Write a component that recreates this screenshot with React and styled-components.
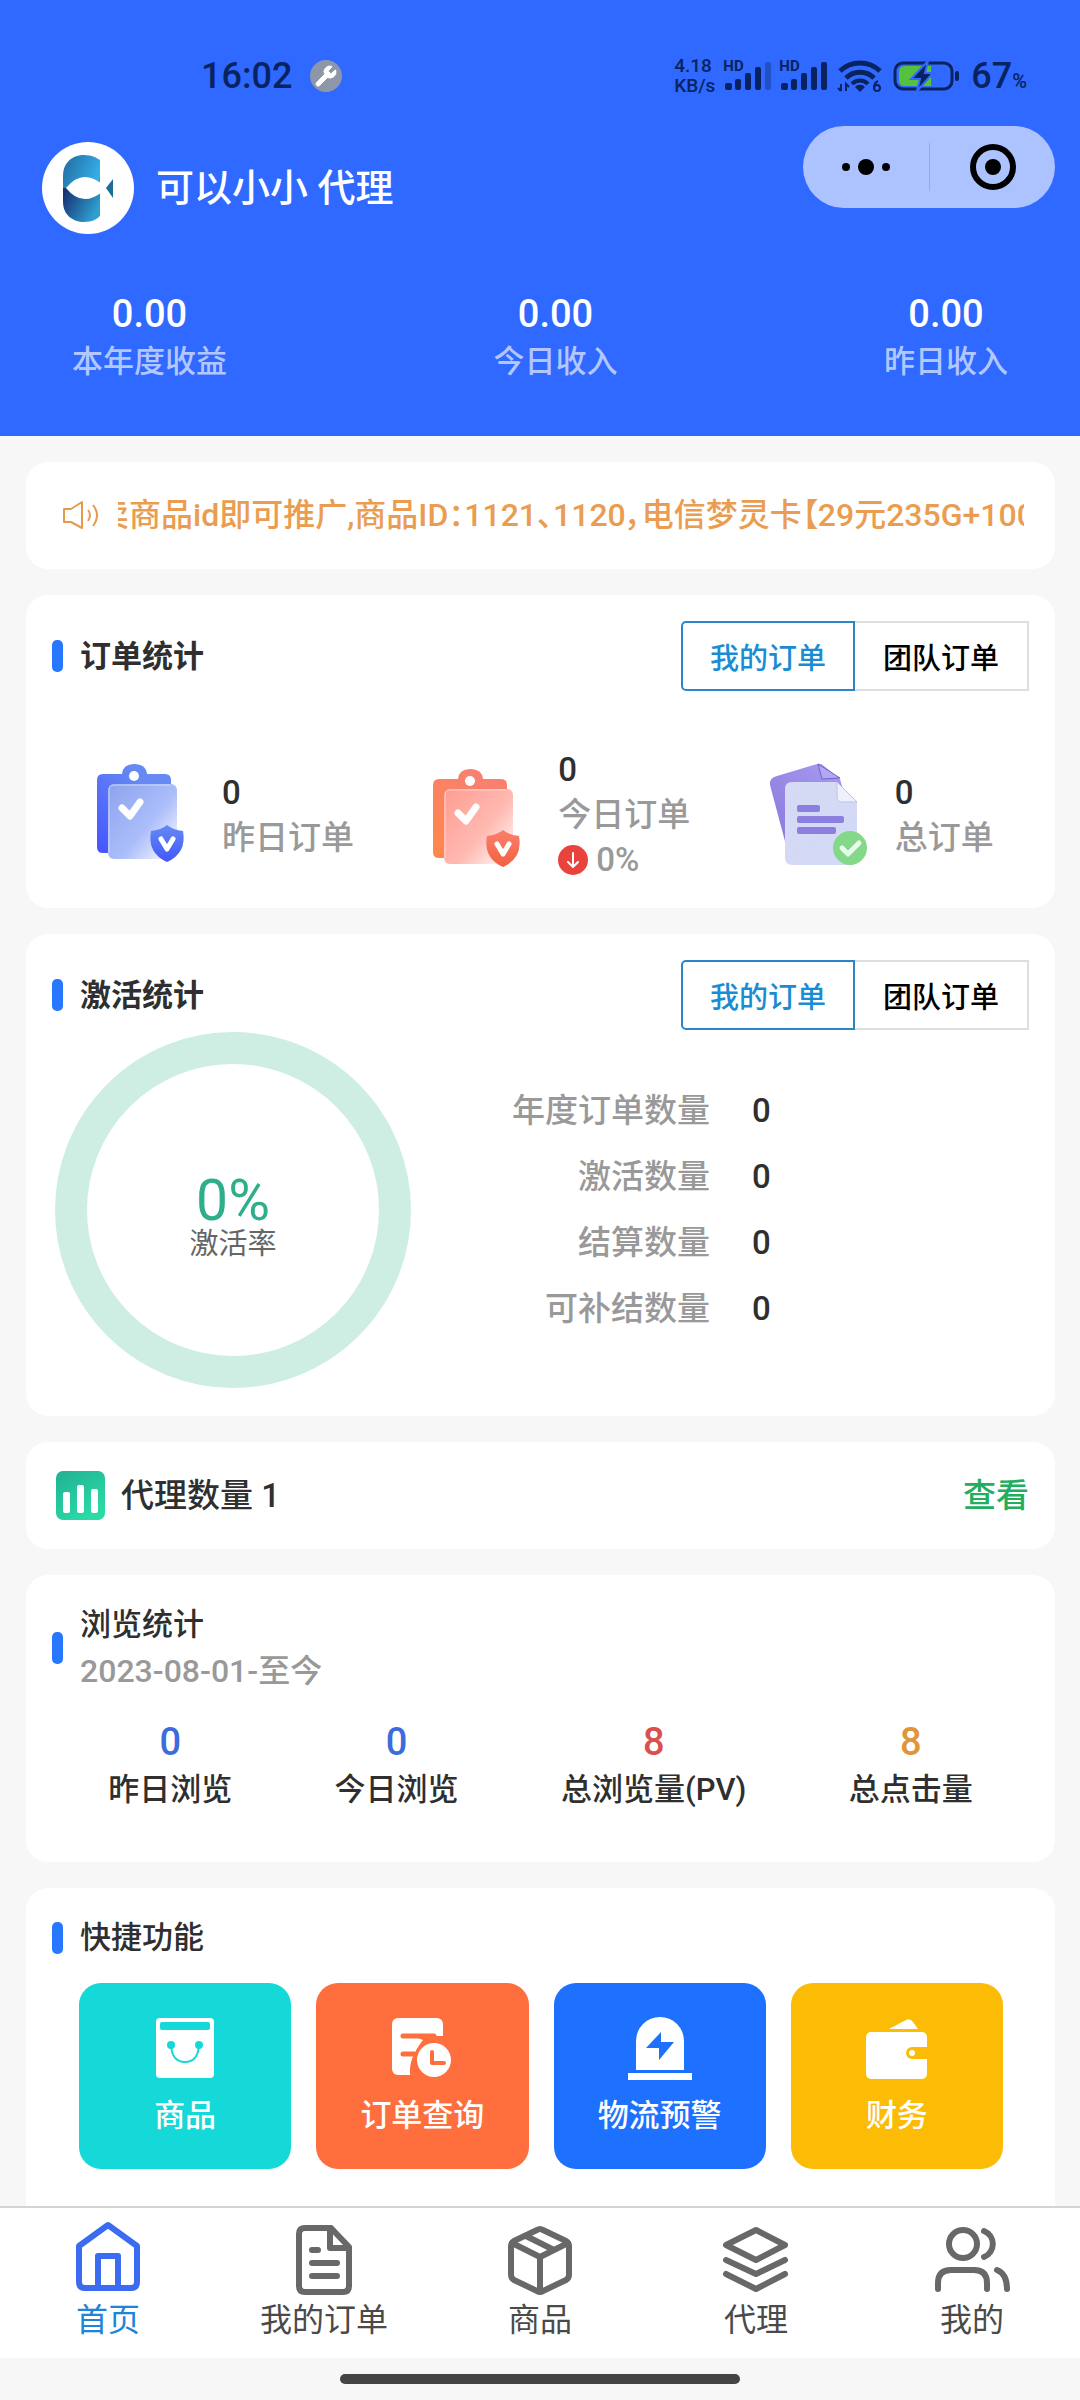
import React, { useState } from "react";
import styled, { createGlobalStyle } from "styled-components";
import { Wrench } from "lucide-react";

const incomes = [
  { label: "本年度收益", value: "0.00" },
  { label: "今日收入", value: "0.00" },
  { label: "昨日收入", value: "0.00" },
];

const activations = [
  { label: "年度订单数量", value: 0 },
  { label: "激活数量", value: 0 },
  { label: "结算数量", value: 0 },
  { label: "可补结数量", value: 0 },
];

const views = [
  { label: "昨日浏览", value: 0, color: "#3c6bdc" },
  { label: "今日浏览", value: 0, color: "#3c6bdc" },
  { label: "总浏览量(PV)", value: 8, color: "#d9504f" },
  { label: "总点击量", value: 8, color: "#e0953a" },
];

function Signal({ weak }) {
  return (
    <SignalWrap>
      <SignalLabel>HD</SignalLabel>
      <svg width="46" height="28" viewBox="0 0 46 28" fill="#08235f">
        <rect x="0" y="21" width="7" height="7" rx="2" />
        <rect x="10" y="17" width="6" height="11" rx="2" />
        <rect x="20" y="11" width="6" height="17" rx="2" />
        <rect x="30" y="5" width="6" height="23" rx="2" />
        <rect x="40" y="0" width="6" height="28" rx="2" opacity={weak ? 0.35 : 1} />
      </svg>
    </SignalWrap>
  );
}

function WifiIcon() {
  return (
    <svg width="46" height="34" viewBox="0 0 46 34" fill="none" stroke="#08235f" strokeWidth="5">
      <path d="M3 12 A29 29 0 0 1 43 12" />
      <path d="M9 19 A20 20 0 0 1 37 19" />
      <path d="M15 25 A11 11 0 0 1 31 25" strokeWidth="4" />
      <path d="M18 28 A6 5 0 0 1 28 28 L23 33 Z" fill="#08235f" stroke="none" />
      <path d="M4 25 V32 M1 29 L4 32 M9 32 V25 L12 28" strokeWidth="2" />
      <circle cx="40" cy="29" r="3" strokeWidth="2" />
      <path d="M37 29 Q37 24 41 22" strokeWidth="2" />
    </svg>
  );
}

function BatteryIcon() {
  return (
    <svg width="68" height="34" viewBox="0 0 68 34">
      <rect x="2" y="4" width="57" height="26" rx="8" fill="none" stroke="#08235f" strokeWidth="3" />
      <path d="M12 7 H38 V27 H12 Q6 27 6 21 V13 Q6 7 12 7 Z" fill="#55c13c" />
      <rect x="62" y="12" width="4" height="10" rx="2" fill="#08235f" />
      <path
        d="M35 2 L18 20 H27 L24 32 L40 14 H32 Z"
        fill="#08235f"
        stroke="#3069ff"
        strokeWidth="2"
      />
    </svg>
  );
}

function AvatarLogo() {
  return (
    <svg width="92" height="92" viewBox="0 0 92 92">
      <defs>
        <linearGradient id="logoTop" x1="0" y1="0" x2="1" y2="0.4">
          <stop offset="0" stopColor="#1f6a9c" />
          <stop offset="1" stopColor="#35ace6" />
        </linearGradient>
        <linearGradient id="logoBottom" x1="0" y1="0" x2="1" y2="0.5">
          <stop offset="0" stopColor="#15296b" />
          <stop offset="1" stopColor="#2f9fd0" />
        </linearGradient>
      </defs>
      <circle cx="46" cy="46" r="46" fill="#fff" />
      <path d="M21 46 V34 C21 20 31 13 42 13 C50 13 55 16 58 18 V46 Z" fill="url(#logoTop)" />
      <path d="M21 46 V60 C21 73 31 80 42 80 C50 80 55 77 58 74 V46 Z" fill="url(#logoBottom)" />
      <path d="M24 46 Q40 26 60 42 L60 50 Q40 66 24 46 Z" fill="#fff" />
      <path d="M64 46 L71 37 V56 Z" fill="#1c6d97" />
    </svg>
  );
}

function SpeakerIcon() {
  return (
    <svg width="40" height="32" viewBox="0 0 40 32" fill="none" stroke="#e59a4e" strokeWidth="2">
      <path d="M2 9 H9 L20 2 V28 L9 22 H2 Z" strokeLinejoin="round" />
      <path d="M26 10 Q30 15 26 21" />
      <path d="M31 5 Q39 15 31 26" />
    </svg>
  );
}

function ClipboardIcon({ id, top, from, to, back, shield, front, fade }) {
  return (
    <svg width="104" height="104" viewBox={`0 ${-top} 104 104`}>
      <defs>
        <linearGradient id={`${id}Back`} x1="1" y1="0" x2="0" y2="1">
          <stop offset="0.3" stopColor={from} />
          <stop offset="1" stopColor={back} />
        </linearGradient>
        <linearGradient id={`${id}Front`} x1="0.1" y1="0" x2="1" y2="0.8">
          <stop offset="0" stopColor={front} />
          <stop offset="0.6" stopColor={to} />
          <stop offset="1" stopColor={fade} />
        </linearGradient>
        <linearGradient id={`${id}Shield`} x1="0" y1="0" x2="0" y2="1">
          <stop offset="0" stopColor={from} />
          <stop offset="1" stopColor={shield} />
        </linearGradient>
      </defs>
      <path
        d="M11 11 H30 Q31 1 42 1 Q54 1 55 11 H73 Q79 11 79 17 V84 Q79 90 73 90 H11 Q5 90 5 84 V17 Q5 11 11 11 Z"
        fill={`url(#${id}Back)`}
      />
      <circle cx="42" cy="13" r="5" fill="#fff" />
      <rect x="16" y="21" width="69" height="75" rx="6" fill={`url(#${id}Front)`} />
      <path d="M17 90 V27 Q17 22 22 22 H78" fill="none" stroke="#fff" strokeOpacity="0.5" strokeWidth="1" />
      <path
        d="M30 45 L38 53 L48 39"
        fill="none"
        stroke="#fff"
        strokeWidth="7"
        strokeLinecap="round"
        strokeLinejoin="round"
      />
      <path
        d="M75 62 Q81 67 91 68 Q95 90 75 99 Q55 90 59 68 Q69 67 75 62 Z"
        fill={`url(#${id}Shield)`}
      />
      <path
        d="M69 76 L75 86 L81 76"
        fill="none"
        stroke="#fff"
        strokeWidth="5"
        strokeLinecap="round"
        strokeLinejoin="round"
      />
    </svg>
  );
}

function DocumentsIcon() {
  return (
    <svg width="104" height="104" viewBox="0 0 104 104">
      <defs>
        <linearGradient id="docBack" x1="1" y1="0" x2="0" y2="1">
          <stop offset="0" stopColor="#a99cf0" />
          <stop offset="1" stopColor="#8a78dd" />
        </linearGradient>
        <linearGradient id="docFront" x1="0" y1="0" x2="0.5" y2="1">
          <stop offset="0" stopColor="#d5dbf4" />
          <stop offset="1" stopColor="#d3d9f6" />
        </linearGradient>
      </defs>
      <path d="M12 13 L52 1 Q56 0 59 3 L75 16 L82 40 L21 82 L5 22 Q4 15 12 13 Z" fill="url(#docBack)" />
      <path d="M53 1 L57 16 L75 15 Z" fill="#b3a8f6" stroke="#7462c4" strokeWidth="1" />
      <path
        d="M27 19 H72 L92 39 V95 Q92 102 85 102 H27 Q20 102 20 95 V26 Q20 19 27 19 Z"
        fill="url(#docFront)"
      />
      <path d="M72 19 L92 39 H77 Q72 39 72 34 Z" fill="#eef0fb" stroke="#bcc3e4" strokeWidth="1" />
      <rect x="32" y="42" width="23" height="7" rx="2" fill="#8d7fe0" />
      <rect x="32" y="53" width="47" height="7" rx="2" fill="#8d7fe0" />
      <rect x="32" y="64" width="39" height="7" rx="2" fill="#8d7fe0" />
      <circle cx="85" cy="85" r="17" fill="#84d989" />
      <path
        d="M77 85 L83 91 L94 80"
        fill="none"
        stroke="#e9fbea"
        strokeWidth="5"
        strokeLinecap="round"
        strokeLinejoin="round"
      />
    </svg>
  );
}

function DownIcon() {
  return (
    <svg width="30" height="30" viewBox="0 0 30 30">
      <circle cx="15" cy="15" r="15" fill="#e8433c" />
      <path
        d="M15 8 V21 M10 17 L15 22 L20 17"
        fill="none"
        stroke="#fff"
        strokeWidth="2"
        strokeLinecap="round"
        strokeLinejoin="round"
      />
    </svg>
  );
}

function ChartIcon() {
  return (
    <svg width="49" height="49" viewBox="0 0 49 49">
      <defs>
        <linearGradient id="chartBg" x1="0" y1="0" x2="0.6" y2="1">
          <stop offset="0" stopColor="#22b093" />
          <stop offset="1" stopColor="#2adba6" />
        </linearGradient>
      </defs>
      <rect width="49" height="49" rx="7" fill="url(#chartBg)" />
      <rect x="7" y="21" width="7" height="21" rx="2" fill="#fff" />
      <rect x="21" y="14" width="7" height="28" rx="2" fill="#fff" />
      <rect x="35" y="18" width="7" height="24" rx="2" fill="#fff" />
    </svg>
  );
}

const tiles = [
  {
    label: "商品",
    color: "#15d8d8",
    icon: (c) => (
      <>
        <rect x="3" y="2" width="58" height="60" rx="4" fill="#fff" />
        <rect x="7" y="6" width="50" height="8" rx="2" fill={c} />
        <circle cx="18" cy="29" r="4" fill={c} />
        <circle cx="46" cy="29" r="4" fill={c} />
        <path d="M18 29 Q19 46 32 46 Q45 46 46 29" fill="none" stroke={c} strokeWidth="2" />
      </>
    ),
  },
  {
    label: "订单查询",
    color: "#ff6e3d",
    icon: (c) => (
      <>
        <rect x="2" y="2" width="51" height="57" rx="6" fill="#fff" />
        <path d="M13 20 H44 M13 38 H24" stroke={c} strokeWidth="5" strokeLinecap="round" />
        <path d="M28 22 H54 V20 L64 30 V62 H22 Q17 44 33 24 Z" fill={c} />
        <path d="M20 59 Q18 36 42 20 H60 V59 Z" fill={c} />
        <circle cx="44" cy="44" r="17" fill="#fff" />
        <path
          d="M42 36 V47 H54"
          fill="none"
          stroke={c}
          strokeWidth="4"
          strokeLinecap="round"
          strokeLinejoin="round"
        />
      </>
    ),
  },
  {
    label: "物流预警",
    color: "#1e70ff",
    icon: (c) => (
      <>
        <path d="M8 54 V25 A24 24 0 0 1 56 25 V54 Z" fill="#fff" />
        <path d="M33 16 V26 H46 L31 44 V32 H18 Z" fill={c} />
        <rect x="0" y="57" width="64" height="7" fill="#fff" />
      </>
    ),
  },
  {
    label: "财务",
    color: "#fcbc05",
    icon: (c) => (
      <>
        <path d="M24 13 L41 4 Q45 2 48 6 L53 13 Z" fill="#fff" />
        <rect x="1" y="16" width="61" height="47" rx="5" fill="#fff" />
        <path d="M64 31 H47 A6 6 0 0 0 47 43 H64 Z" fill={c} />
        <circle cx="47" cy="37" r="3" fill="#fff" />
      </>
    ),
  },
];

const tabs = [
  {
    label: "首页",
    icon: (
      <>
        <path d="M40 7 L69 28 V64 Q69 70 63 70 H17 Q11 70 11 64 V28 Z" />
        <path d="M30 70 V38 H50 V70" />
      </>
    ),
  },
  {
    label: "我的订单",
    icon: (
      <>
        <path d="M47 10 H21 Q15 10 15 16 V68 Q15 74 21 74 H59 Q65 74 65 68 V29 Z" />
        <path d="M46 10 V30 H65" />
        <path d="M28 32 H34 M28 45 H53 M28 58 H53" />
      </>
    ),
  },
  {
    label: "商品",
    icon: (
      <>
        <path d="M37 12 Q40 10 43 12 L66 23 Q69 25 69 28 V57 Q69 60 66 62 L43 73 Q40 75 37 73 L14 62 Q11 60 11 57 V28 Q11 25 14 23 Z" />
        <path d="M12 25 L40 39 L68 25 M40 39 V73 M26 18 L54 32" />
      </>
    ),
  },
  {
    label: "代理",
    icon: (
      <>
        <path d="M40 12 L69 27 L40 42 L10 27 Z" />
        <path d="M10 42 L40 56 L69 42 M10 56 L40 71 L69 56" />
      </>
    ),
  },
  {
    label: "我的",
    icon: (
      <>
        <circle cx="31" cy="26" r="14" />
        <path d="M52 13 A14 14 0 0 1 52 39" />
        <path d="M6 71 V65 Q6 52 19 52 H42 Q55 52 55 65 V71" />
        <path d="M65 52 Q75 56 75 71" />
      </>
    ),
  },
];

function OrderSwitch() {
  const [active, setActive] = useState(0);
  return (
    <Switch>
      {["我的订单", "团队订单"].map((name, index) => (
        <SwitchButton
          key={name}
          type="button"
          $active={active === index}
          aria-pressed={active === index}
          onClick={() => setActive(index)}
        >
          {name}
        </SwitchButton>
      ))}
    </Switch>
  );
}

function App() {
  const [tab, setTab] = useState(0);

  return (
    <Page>
      <GlobalStyle />
      <Content>
        <Header>
          <StatusBar>
            <Clock>16:02</Clock>
            <WrenchBadge>
              <Wrench size={24} fill="#fff" color="#fff" strokeWidth={1} />
            </WrenchBadge>
            <StatusRight>
              <NetSpeed>
                <span>4.18</span>
                <span>KB/s</span>
              </NetSpeed>
              <Signal weak />
              <Signal />
              <WifiIcon />
              <BatteryIcon />
              <Percent>
                67<small>%</small>
              </Percent>
            </StatusRight>
          </StatusBar>
          <TopRow>
            <User>
              <AvatarLogo />
              <UserName>可以小小 代理</UserName>
            </User>
            <Capsule>
              <button type="button" aria-label="更多">
                <svg width="50" height="50" viewBox="0 0 50 50">
                  <circle cx="5" cy="25" r="4" />
                  <circle cx="25" cy="25" r="8" />
                  <circle cx="45" cy="25" r="4" />
                </svg>
              </button>
              <button type="button" aria-label="关闭">
                <svg width="50" height="50" viewBox="0 0 50 50">
                  <circle cx="26" cy="25" r="20" fill="none" stroke="#000" strokeWidth="6" />
                  <circle cx="26" cy="25" r="8" />
                </svg>
              </button>
            </Capsule>
          </TopRow>
          <Incomes>
            {incomes.map((item) => (
              <Income key={item.label}>
                <strong>{item.value}</strong>
                <span>{item.label}</span>
              </Income>
            ))}
          </Incomes>
        </Header>

        <Cards>
          <Notice>
            <SpeakerIcon />
            <NoticeText>
              卖商品id即可推广,商品ID：1121、1120，电信梦灵卡【29元235G+100分钟】
            </NoticeText>
          </Notice>

          <Card>
            <CardHeader>
              <Title $bold>订单统计</Title>
              <OrderSwitch />
            </CardHeader>
            <Orders>
              <Order>
                <ClipboardIcon
                  id="blue"
                  top={0}
                  from="#6689f3"
                  back="#4454ff"
                  front="#8fa6ee"
                  to="#abbdfa"
                  fade="#eef2ff"
                  shield="#4257fa"
                />
                <OrderText>
                  <strong>0</strong>
                  <span>昨日订单</span>
                </OrderText>
              </Order>
              <Order>
                <ClipboardIcon
                  id="red"
                  top={5}
                  from="#f9806e"
                  back="#ff8748"
                  front="#ff9f93"
                  to="#ffb9b1"
                  fade="#fff0ee"
                  shield="#f4603f"
                />
                <OrderText>
                  <strong>0</strong>
                  <span>今日订单</span>
                  <Trend>
                    <DownIcon />
                    0%
                  </Trend>
                </OrderText>
              </Order>
              <Order>
                <DocumentsIcon />
                <OrderText>
                  <strong>0</strong>
                  <span>总订单</span>
                </OrderText>
              </Order>
            </Orders>
          </Card>

          <Card>
            <CardHeader>
              <Title $bold>激活统计</Title>
              <OrderSwitch />
            </CardHeader>
            <Activation>
              <Ring>
                <strong>0%</strong>
                <span>激活率</span>
              </Ring>
              <ActivationList>
                {activations.map((item) => (
                  <React.Fragment key={item.label}>
                    <dt>{item.label}</dt>
                    <dd>{item.value}</dd>
                  </React.Fragment>
                ))}
              </ActivationList>
            </Activation>
          </Card>

          <AgentCard>
            <ChartIcon />
            <span>代理数量 1</span>
            <a href="#agents">查看</a>
          </AgentCard>

          <Card>
            <Title>
              浏览统计
              <small>2023-08-01-至今</small>
            </Title>
            <Views>
              {views.map((item) => (
                <View key={item.label} $color={item.color}>
                  <strong>{item.value}</strong>
                  <span>{item.label}</span>
                </View>
              ))}
            </Views>
          </Card>

          <Card>
            <Title>快捷功能</Title>
            <Tiles>
              {tiles.map((item) => (
                <Tile key={item.label} type="button" $color={item.color}>
                  <svg width="64" height="64" viewBox="0 0 64 64">
                    {item.icon(item.color)}
                  </svg>
                  {item.label}
                </Tile>
              ))}
            </Tiles>
          </Card>
        </Cards>
      </Content>

      <TabBar>
        {tabs.map((item, index) => (
          <Tab key={item.label} type="button" $active={tab === index} onClick={() => setTab(index)}>
            <svg width="80" height="80" viewBox="0 0 80 80">
              {item.icon}
            </svg>
            {item.label}
          </Tab>
        ))}
      </TabBar>
      <HomeBar>
        <span />
      </HomeBar>
    </Page>
  );
}

const GlobalStyle = createGlobalStyle`
  * {
    box-sizing: border-box;
  }
  body {
    margin: 0;
    background: #f7f7f7;
    color: #2f2f2f;
    font-family: Roboto, "Noto Sans CJK SC", sans-serif;
    font-size: 31px;
    font-weight: 500;
  }
  button {
    margin: 0;
    padding: 0;
    border: 0;
    background: none;
    color: inherit;
    font: inherit;
    cursor: pointer;
  }
  svg {
    display: block;
    flex-shrink: 0;
  }
`;

const Page = styled.div`
  height: 100vh;
  display: flex;
  flex-direction: column;
`;

const Content = styled.main`
  flex: 1;
  min-height: 0;
  overflow-y: auto;
  scrollbar-width: none;
`;

const Header = styled.header`
  padding: 52px 0 50px;
  background: #3069ff;
  color: #fff;
`;

const StatusBar = styled.div`
  display: flex;
  align-items: center;
  height: 48px;
  padding: 0 53px 0 201px;
  color: #08235f;
`;

const Clock = styled.span`
  font-size: 36px;
`;

const WrenchBadge = styled.span`
  display: flex;
  align-items: center;
  justify-content: center;
  width: 32px;
  height: 32px;
  margin-left: 18px;
  border-radius: 50%;
  background: #8d97a8;
`;

const StatusRight = styled.div`
  display: flex;
  align-items: center;
  gap: 10px;
  margin-left: auto;
`;

const NetSpeed = styled.div`
  display: flex;
  flex-direction: column;
  font-size: 19px;
  line-height: 20px;
`;

const SignalWrap = styled.div`
  position: relative;
`;

const SignalLabel = styled.span`
  position: absolute;
  top: -4px;
  left: -2px;
  font-size: 15px;
  line-height: 16px;
  font-weight: 700;
`;

const Percent = styled.span`
  font-size: 36px;

  small {
    font-size: 20px;
  }
`;

const TopRow = styled.div`
  display: flex;
  align-items: flex-start;
  justify-content: space-between;
  margin-top: 26px;
  padding: 0 25px 0 42px;
`;

const User = styled.div`
  display: flex;
  align-items: center;
  gap: 22px;
  margin-top: 16px;
`;

const UserName = styled.span`
  font-size: 38px;
  line-height: 48px;
`;

const Capsule = styled.div`
  display: flex;
  align-items: center;
  width: 252px;
  height: 82px;
  border-radius: 41px;
  background: #adc3ff;

  button {
    flex: 1;
    height: 48px;
    display: flex;
    align-items: center;
    justify-content: center;
  }
  button + button {
    border-left: 1px solid #8fabf5;
  }
`;

const Incomes = styled.div`
  display: flex;
  justify-content: space-between;
  margin-top: 56px;
  padding: 0 72px;
`;

const Income = styled.div`
  display: flex;
  flex-direction: column;
  align-items: center;
  line-height: 48px;

  strong {
    font-size: 38px;
    font-weight: 500;
  }
  span {
    color: #b3c7ff;
  }
`;

const Cards = styled.div`
  display: flex;
  flex-direction: column;
  gap: 26px;
  padding: 26px 25px 0 26px;
`;

const Card = styled.section`
  padding: 26px;
  border-radius: 22px;
  background: #fff;
`;

const Notice = styled(Card)`
  display: flex;
  align-items: center;
  gap: 16px;
  padding: 30px 31px 30px 36px;
  color: #ea9d50;
`;

const NoticeText = styled.p`
  flex: 1;
  min-width: 0;
  margin: 0;
  overflow: hidden;
  white-space: nowrap;
  font-size: 32px;
  line-height: 47px;
  font-feature-settings: "palt";
  text-indent: -21px;
`;

const CardHeader = styled.div`
  display: flex;
  align-items: center;
  justify-content: space-between;
`;

const Title = styled.h2`
  display: flex;
  flex-direction: column;
  position: relative;
  margin: 0;
  padding-left: 28px;
  font-size: 31px;
  font-weight: ${({ $bold }) => ($bold ? 700 : 500)};
  line-height: 47px;

  &::before {
    content: "";
    position: absolute;
    left: 0;
    top: calc(50% - 16px);
    width: 11px;
    height: 32px;
    border-radius: 5px;
    background: #2878ff;
  }
  small {
    color: #999;
    font-size: 32px;
    font-weight: 500;
  }
`;

const Switch = styled.div`
  display: flex;
`;

const SwitchButton = styled.button`
  width: 174px;
  height: 70px;
  border: 2px solid ${({ $active }) => ($active ? "#2a86c4" : "#dcdfe2")};
  color: ${({ $active }) => ($active ? "#1a8cd4" : "#000")};
  font-size: 29px;

  &:first-child {
    border-radius: 5px 0 0 5px;
    border-right-width: ${({ $active }) => ($active ? "2px" : "0")};
  }
  &:last-child {
    border-left-width: ${({ $active }) => ($active ? "2px" : "0")};
  }
`;

const Orders = styled.div`
  display: grid;
  grid-template-columns: repeat(3, 1fr);
  margin: 56px -16px 0;
`;

const Order = styled.div`
  display: flex;
  align-items: center;
  gap: 26px;
  padding-left: 56px;
  white-space: nowrap;
`;

const OrderText = styled.div`
  display: flex;
  flex-direction: column;
  color: #999;
  font-size: 33px;
  line-height: 45px;

  strong {
    color: #2f2f2f;
    font-weight: 500;
  }
`;

const Trend = styled.div`
  display: flex;
  align-items: center;
  gap: 8px;
`;

const Activation = styled.div`
  display: flex;
  align-items: center;
  padding: 2px 0 2px 3px;
`;

const Ring = styled.div`
  display: flex;
  flex-direction: column;
  align-items: center;
  justify-content: center;
  width: 356px;
  height: 356px;
  padding-top: 16px;
  border: 32px solid #cfeee3;
  border-radius: 50%;

  strong {
    color: #2fae8c;
    font-size: 57px;
    font-weight: 400;
    line-height: 52px;
  }
  span {
    color: #666;
    font-size: 29px;
    font-weight: 400;
    line-height: 34px;
  }
`;

const ActivationList = styled.dl`
  display: grid;
  grid-template-columns: auto auto;
  column-gap: 42px;
  margin: 0 0 0 101px;
  font-size: 33px;
  line-height: 66px;

  dt {
    color: #999;
    text-align: right;
  }
  dd {
    margin: 0;
  }
`;

const AgentCard = styled(Card)`
  display: flex;
  align-items: center;
  gap: 16px;
  padding: 29px 26px 29px 30px;
  font-size: 33px;
  line-height: 49px;

  a {
    margin-left: auto;
    color: #22ad5f;
    text-decoration: none;
  }
`;

const Views = styled.div`
  display: flex;
  justify-content: space-around;
  margin-top: 24px;
  padding: 0 5px 23px;
`;

const View = styled.div`
  display: flex;
  flex-direction: column;
  align-items: center;
  line-height: 47px;

  strong {
    color: ${({ $color }) => $color};
    font-size: 38px;
    font-weight: 500;
  }
`;

const Tiles = styled.div`
  display: grid;
  grid-template-columns: repeat(4, 1fr);
  gap: 25px;
  margin-top: 22px;
  padding: 0 26px 38px 27px;
`;

const Tile = styled.button`
  display: flex;
  flex-direction: column;
  align-items: center;
  gap: 12px;
  padding: 33px 0 30px;
  border-radius: 22px;
  background: ${({ $color }) => $color};
  color: #fff;
  line-height: 47px;
`;

const TabBar = styled.nav`
  display: grid;
  grid-template-columns: repeat(5, 1fr);
  border-top: 2px solid #d4d4d4;
  background: #fff;
`;

const Tab = styled.button`
  display: flex;
  flex-direction: column;
  align-items: center;
  gap: 2px;
  padding: 10px 0 18px;
  color: ${({ $active }) => ($active ? "#1f83d8" : "#4a4a4a")};
  font-size: 32px;
  font-weight: 400;
  line-height: 40px;

  svg {
    fill: none;
    stroke: ${({ $active }) => ($active ? "#3a6bf0" : "#686868")};
    stroke-width: 6px;
    stroke-linecap: round;
    stroke-linejoin: round;
  }
`;

const HomeBar = styled.div`
  display: flex;
  justify-content: center;
  padding: 16px 0;

  span {
    width: 37%;
    height: 10px;
    border-radius: 5px;
    background: #444;
  }
`;

export default App;
